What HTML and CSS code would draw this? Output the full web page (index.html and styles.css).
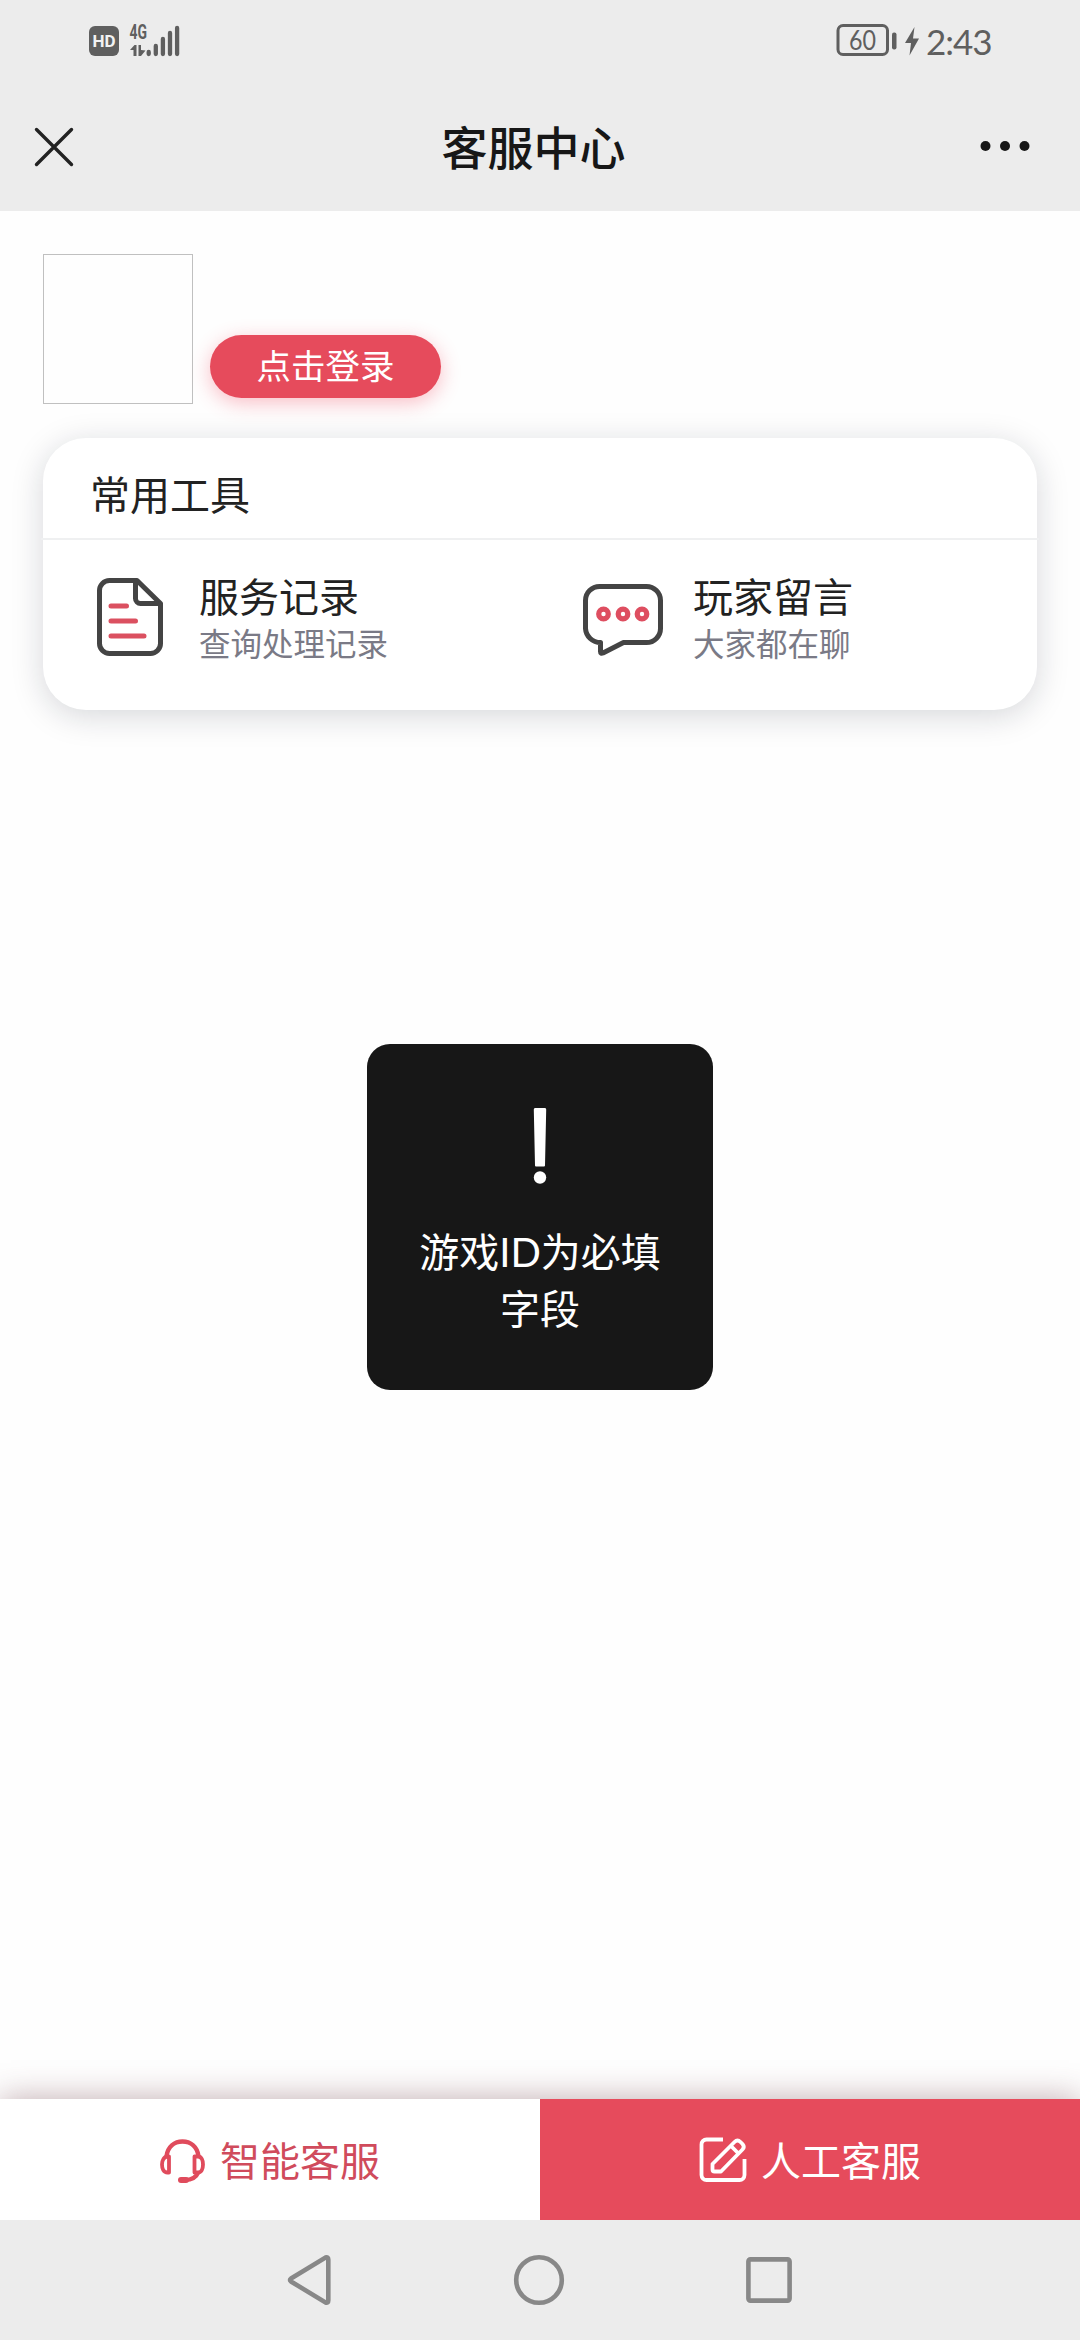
FILE: index.html
```html
<!DOCTYPE html>
<html lang="zh-CN">
<head>
<meta charset="utf-8">
<title>客服中心</title>
<link rel="stylesheet" href="styles.css">
</head>
<body>
<div class="screen">
  <header class="top">
    <div class="status">
      <div class="status-left">
        <span class="hd">HD</span>
        <svg class="signal" width="52" height="34" viewBox="0 0 52 34">
          <text class="net" x="1.500" y="15.500" textLength="17.500" lengthAdjust="spacingAndGlyphs">4G</text>
          <path class="fill" d="M2 27L6.500 22H8.500V33H5.500V27ZM10.500 22h2.500v5l4.500 0.500L13 33h-2.500Z"/>
          <path class="bars" d="M20.700 29V31M27.800 23V31M34.900 16V31M42 10V31M49.100 5V31"/>
        </svg>
      </div>
      <div class="status-right">
        <svg width="84" height="34" viewBox="0 0 84 34">
          <rect class="line" x="2" y="2.500" width="49.500" height="29" rx="5"/>
          <rect class="fill" x="56" y="9.500" width="4.500" height="17" rx="2"/>
          <text class="level" x="13" y="27" textLength="27" lengthAdjust="spacingAndGlyphs">60</text>
          <path class="fill" d="M78.500 4L69 20H75L73.500 32.500L83 15.500H77Z"/>
        </svg>
        <span class="clock">2:43</span>
      </div>
    </div>
    <div class="titlebar">
      <svg class="close" width="38" height="38" viewBox="0 0 38 38"><path d="M1.500 1.500L36.500 36.500M36.500 1.500L1.500 36.500"/></svg>
      <h1 class="title">客服中心</h1>
      <svg class="more" width="50" height="12" viewBox="0 0 50 12"><circle cx="5.500" cy="6" r="5"/><circle cx="25" cy="6" r="5"/><circle cx="44.500" cy="6" r="5"/></svg>
    </div>
  </header>

  <main class="content">
    <section class="user">
      <div class="avatar"></div>
      <button class="login">点击登录</button>
    </section>

    <section class="card">
      <h2 class="card-title">常用工具</h2>
      <div class="divider"></div>
      <div class="tools">
        <a class="tool tool-record">
          <svg class="tool-icon" width="66" height="78" viewBox="0 0 66 78">
            <path class="ink" d="M37 2.500H12.500a10 10 0 0 0-10 10v53a10 10 0 0 0 10 10h41a10 10 0 0 0 10-10V25.500L40 2.500ZM38.500 3v17.500a5 5 0 0 0 5 5H62"/>
            <path class="accent" d="M14 28H29.500M14 43H38.500M14 58H47"/>
          </svg>
          <span class="tool-text"><b>服务记录</b><small>查询处理记录</small></span>
        </a>
        <a class="tool tool-message">
          <svg class="tool-icon bubble" width="80" height="72" viewBox="0 0 80 72">
            <path class="ink" d="M16.500 2.500H63.500a14 14 0 0 1 14 14V44.500a14 14 0 0 1-14 14H40.500L20 69q-2.500 1-2.500-1.500V58.500a15 15 0 0 1-15-14V16.500a14 14 0 0 1 14-14Z"/>
            <g class="ring"><circle cx="20.500" cy="30" r="4.800"/><circle cx="40" cy="30" r="4.800"/><circle cx="59" cy="30" r="4.800"/></g>
          </svg>
          <span class="tool-text"><b>玩家留言</b><small>大家都在聊</small></span>
        </a>
      </div>
    </section>
  </main>

  <div class="actions">
    <a class="action smart">
      <svg width="46" height="46" viewBox="0 0 46 46">
        <path class="head" d="M6.500 17C8 7.500 14.500 2.500 22.500 2.500S37 7.500 38.500 17"/>
        <path class="head thin" d="M9 17.500V33.500H7.500C3.500 33.500 2 29.500 2 25.500S4 17.500 7.500 17.500ZM34.500 17.500V33.500H38C41.500 33.500 43 29.500 43 25.500S41.500 17.500 38 17.500Z"/>
        <path class="head" d="M38.500 33C36 39 31 41 25 41"/>
        <path class="mic" d="M21 41H26"/>
      </svg>
      <span>智能客服</span>
    </a>
    <a class="action human">
      <svg width="48" height="46" viewBox="0 0 48 46">
        <path class="edit" d="M24 2.500H7.500a5 5 0 0 0-5 5V38a5 5 0 0 0 5 5H40.500a5 5 0 0 0 5-5V22"/>
        <path class="edit thin" d="M13.500 27L35.500 5Q38.500 2 41.500 5L43.500 7Q46 10 43.500 12.500L22 34.500H15.500a2 2 0 0 1-2-2ZM32 9L39.500 16.500"/>
      </svg>
      <span>人工客服</span>
    </a>
  </div>

  <nav class="nav">
    <svg width="44" height="52" viewBox="0 0 44 52"><path d="M4 24.500L38.500 3.500Q41.300 2.500 41.300 5.500V46.500Q41.300 49.500 38.500 48.500L4 27.500Q2 26 4 24.500Z"/></svg>
    <svg width="52" height="52" viewBox="0 0 52 52"><circle cx="26" cy="26" r="22.800"/></svg>
    <svg width="46" height="46" viewBox="0 0 46 46"><rect x="2.400" y="2.400" width="41.200" height="41.200" rx="2"/></svg>
  </nav>

  <div class="toast" role="alert">
    <svg width="14" height="76" viewBox="0 0 14 76"><path d="M2 0H12Q13.300 0 13.200 1.500L12 57.500Q12 58.500 11 58.500H3Q2 58.500 2 57.500L0.800 1.500Q0.800 0 2 0Z"/><circle cx="7" cy="69.500" r="6.200"/></svg>
    <p>游戏<span class="latin">ID</span>为必填字段</p>
  </div>
</div>
</body>
</html>
```

FILE: styles.css
```css
* { box-sizing: border-box; margin: 0; padding: 0; }

body {
  width: 1080px;
  height: 2340px;
  overflow: hidden;
  font-family: "Noto Sans CJK SC", "Noto Sans", sans-serif;
  color: #222;
  background: #fefefe;
}

svg { display: block; flex: none; fill: none; overflow: visible; }

.screen {
  position: relative;
  height: 2340px;
  display: flex;
  flex-direction: column;
}

/* status and title bars */
.top { flex: none; height: 211px; background: #ececec; }
.status {
  height: 82px;
  padding: 23px 87px 0 89px;
  display: flex;
  justify-content: space-between;
  align-items: flex-start;
  font-family: Lato, sans-serif;
  color: #5f5f5f;
}
.status-left, .status-right { display: flex; }
.hd {
  width: 30px;
  height: 30px;
  margin-top: 3px;
  border-radius: 6px;
  background: #5f5f5f;
  color: #f2f2f2;
  font: 700 17px/31px Roboto, sans-serif;
  text-align: center;
}
.signal { margin-left: 9px; }
.net { font: 700 19.5px Roboto, sans-serif; fill: #5f5f5f; }
.fill { fill: #5f5f5f; }
.bars { stroke: #5f5f5f; stroke-width: 4.3; stroke-linecap: round; }
.line { stroke: #5f5f5f; stroke-width: 3; }
.level { font: 400 27px Lato, sans-serif; fill: #5f5f5f; }
.clock {
  width: 67px;
  margin-left: 6px;
  font-size: 35px;
  line-height: 36px;
  letter-spacing: -1px;
  white-space: nowrap;
}

.titlebar {
  height: 129px;
  padding: 0 50px 0 35px;
  display: flex;
  justify-content: space-between;
}
.close { margin-top: 46px; stroke: #222; stroke-width: 3.4; stroke-linecap: round; }
.title { margin: 29px 0 0 14px; font-size: 46px; line-height: 68px; font-weight: 500; color: #171717; }
.more { margin: 58px 0 0 0; fill: #171717; }

/* page */
.content { flex: 1; padding: 43px 43px 0; }
.user { display: flex; align-items: flex-end; height: 150px; }
.avatar { width: 150px; height: 150px; border: 1px solid #c0c0c0; }
.login {
  width: 231px;
  height: 63px;
  margin: 0 0 6px 17px;
  padding-bottom: 5px;
  border: 0;
  border-radius: 32px;
  background: #e64b5c;
  box-shadow: 0 5px 20px rgba(240, 60, 85, .33);
  color: #fff;
  font: 400 34.5px/58px "Noto Sans CJK SC", sans-serif;
}
.card {
  height: 272px;
  margin-top: 34px;
  border-radius: 43px;
  background: #fff;
  box-shadow: 0 6px 32px rgba(15, 25, 40, .17);
}
.card-title {
  height: 100px;
  padding-left: 47px;
  font-size: 40px;
  line-height: 111px;
  font-weight: 400;
}
.divider { height: 2px; margin: 0 -2px; background: #eff0f1; }
.tools { display: grid; grid-template-columns: 494px 1fr; }
.tool { display: flex; padding-top: 38px; }
.tool-icon { margin-left: 54px; }
.tool-icon.bubble { margin: 6px 0 0 46px; }
.tool-text { margin-left: 36px; display: flex; flex-direction: column; }
.tool-message .tool-text { margin-left: 30px; }
.tool-text b { font-size: 40px; line-height: 48px; font-weight: 400; margin-top: -7px; }
.tool-text small { font-size: 31.5px; line-height: 46px; color: #7a7a86; }
.ink { stroke: #444; stroke-width: 5; stroke-linejoin: round; }
.accent { stroke: #db5060; stroke-width: 5; stroke-linecap: round; }
.ring { stroke: #de4e60; stroke-width: 5.2; }

/* bottom actions */
.actions {
  flex: none;
  height: 121px;
  display: grid;
  grid-template-columns: 1fr 1fr;
  box-shadow: 0 0 32px rgba(100, 45, 55, .4);
}
.action { display: flex; padding-top: 38px; font-size: 40px; line-height: 44px; }
.action svg { margin-top: 2px; }
.smart { padding-left: 160px; background: #fff; color: #d04b5c; }
.smart span { margin-left: 14px; }
.human { padding-left: 159px; background: #e64b5c; color: #fff; }
.human svg { margin-top: 0; }
.human span { margin-left: 14px; }
.head { stroke: #e04b5c; stroke-width: 4.4; stroke-linejoin: round; }
.mic { stroke: #e04b5c; stroke-width: 6; stroke-linecap: round; }
.edit { stroke: #fff; stroke-width: 3.8; stroke-linejoin: round; }
.head.thin, .edit.thin { stroke-width: 3.8; }

/* system navigation */
.nav {
  position: relative;
  flex: none;
  height: 120px;
  padding: 0 288px 0 287px;
  display: flex;
  align-items: center;
  justify-content: space-between;
  background: #ececec;
  stroke: #888;
  stroke-width: 4.6;
}

.toast {
  position: absolute;
  left: 367px;
  top: 1044px;
  width: 346px;
  height: 346px;
  padding: 64px 50px 0;
  border-radius: 23px;
  background: #171717;
  color: #fff;
  display: flex;
  flex-direction: column;
  align-items: center;
}
.toast svg { fill: #fff; }
.toast p { margin-top: 38px; width: 246px; font-size: 40px; line-height: 57px; text-align: center; }
.latin { font-family: Lato, sans-serif; line-height: 1; }
```
